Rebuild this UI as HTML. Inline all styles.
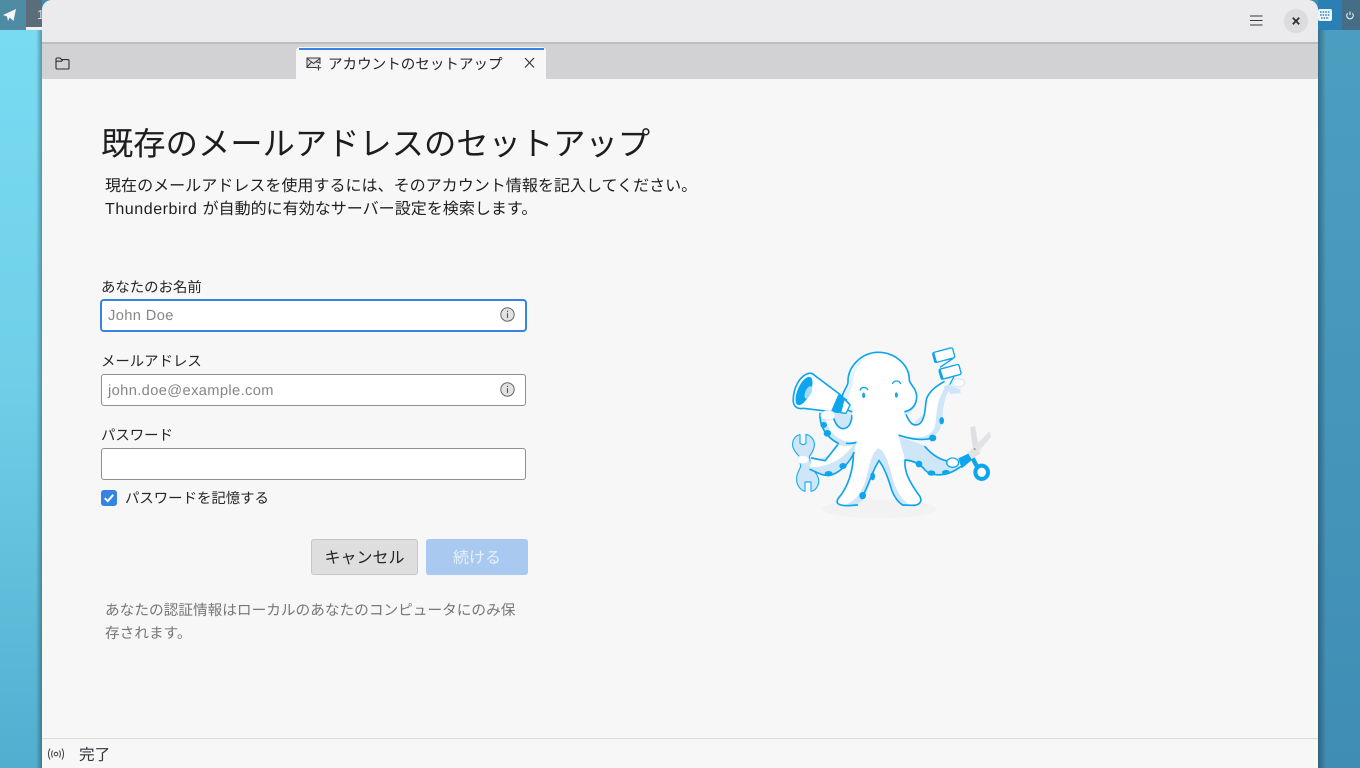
<!DOCTYPE html>
<html lang="ja">
<head>
<meta charset="utf-8">
<style>
html,body{margin:0;padding:0;width:1360px;height:768px;overflow:hidden;background:#3f8db5;}
body{position:relative;font-family:"Liberation Sans","Noto Sans CJK JP",sans-serif;color:#1f1f22;text-rendering:geometricPrecision;}
.a{position:absolute;white-space:nowrap;}
.input{position:absolute;left:101px;width:423px;height:30px;background:#fff;border:1px solid #8f8f93;border-radius:3px;}
.ph{position:absolute;left:108px;color:#85858a;font-size:14.67px;line-height:20px;white-space:nowrap;letter-spacing:.38px;}
.lbl{position:absolute;left:101px;font-size:14.4px;line-height:20px;white-space:nowrap;color:#26262a;}
</style>
</head>
<body>
<div class="a" style="left:0;top:0;width:42px;height:768px;background:linear-gradient(180deg,#7adcf3 0,#6fcfe8 50%,#52aecf 100%);"></div>
<div class="a" style="left:1318px;top:0;width:42px;height:768px;background:linear-gradient(180deg,#4d9fc0 0,#3f8db5 100%);"></div>
<div class="a" style="left:36px;top:0;width:6px;height:768px;background:linear-gradient(90deg,rgba(0,0,0,0),rgba(0,0,0,.3));"></div>
<div class="a" style="left:1318px;top:0;width:8px;height:768px;background:linear-gradient(90deg,rgba(0,0,0,.3),rgba(0,0,0,0));"></div>
<div class="a" style="left:0;top:0;width:26px;height:30px;background:#4f8ba3;"></div>
<div class="a" style="left:26px;top:0;width:16px;height:30px;background:#5b6c7b;"></div>
<div class="a" style="left:26px;top:27px;width:16px;height:3px;background:#f2f2f2;"></div>
<div class="a" style="left:37px;top:6px;color:#d8dde2;font-size:13px;line-height:18px;">1</div>
<svg class="a" style="left:0;top:0" width="20" height="26" viewBox="0 0 20 26"><path d="M3 15 L16 9 L13.5 21 L9.7 17.5 L8 21 L7 16.5 Z" fill="#f4f6f7"/></svg>
<div class="a" style="left:1318px;top:0;width:24px;height:30px;background:#2a7fb5;"></div>
<div class="a" style="left:1342px;top:0;width:18px;height:30px;background:#456d85;"></div>
<svg class="a" style="left:1318px;top:8px" width="15" height="14" viewBox="0 0 15 14"><rect x="0" y="1" width="14" height="12" rx="2" fill="#eef4f8"/><path d="M2 4h10M2 7h10M3 10h8" stroke="#3a86b8" stroke-width="1.4" stroke-dasharray="1.6 1"/></svg>
<svg class="a" style="left:1345px;top:10px" width="10" height="10" viewBox="0 0 10 10"><path d="M2.6 3.2 A3.3 3.3 0 1 0 7.4 3.2 M5 1.5 V5" fill="none" stroke="#e8eef2" stroke-width="1.1"/></svg>

<div class="a" style="left:42px;top:0;width:1276px;height:768px;background:#f7f7f7;border-radius:10px 10px 0 0;overflow:hidden;">
  <div class="a" style="left:0;top:0;width:1276px;height:42px;background:#ebebed;"></div>
  <div class="a" style="left:0;top:42px;width:1276px;height:2px;background:#bdbdbf;"></div>
  <div class="a" style="left:0;top:44px;width:1276px;height:35px;background:#d2d2d4;"></div>
</div>
<svg class="a" style="left:55px;top:57px" width="15" height="13" viewBox="0 0 15 13"><path d="M1 2.2 Q1 1 2.2 1 H5.2 L6.6 2.6 H13 Q14 2.6 14 3.6 V11 Q14 12 13 12 H2 Q1 12 1 11 Z M1 4.2 H6.6 L7.6 3" fill="none" stroke="#2e2e32" stroke-width="1.1"/></svg>
<svg class="a" style="left:1250px;top:15px" width="13" height="11" viewBox="0 0 13 11"><path d="M0 1h12.5M0 5.5h12.5M0 10h12.5" stroke="#3a3a3e" stroke-width="1"/></svg>
<div class="a" style="left:1284px;top:9px;width:24px;height:24px;border-radius:50%;background:#dcdcde;"></div>
<svg class="a" style="left:1292px;top:17px" width="8" height="8" viewBox="0 0 8 8"><path d="M.8 .8L7.2 7.2M7.2 .8L.8 7.2" stroke="#2e2e32" stroke-width="1.8"/></svg>

<div class="a" style="left:296px;top:47px;width:250px;height:32px;background:#f7f7f7;border-radius:4px 4px 0 0;"></div>
<div class="a" style="left:299px;top:48px;width:245px;height:2px;background:#3584e4;"></div>
<svg class="a" style="left:306px;top:57px" width="16" height="14" viewBox="0 0 16 14"><rect x="1" y="1" width="13" height="10" fill="#e4e4e6"/><path d="M10 10.5 H1 V1 H14 V7 M1 1.5 L7.5 6.5 L14 1.5 M1 10 L5.5 5 M14 5.5 L10 5" fill="none" stroke="#3a3a3e" stroke-width="1"/><path d="M12.5 8 V13.5 M9.8 10.8 H15.2" stroke="#3a3a3e" stroke-width="1"/></svg>
<div class="a" style="left:328px;top:54px;font-size:14.55px;line-height:22px;color:#26262a;">アカウントのセットアップ</div>
<svg class="a" style="left:524px;top:58px" width="11" height="10" viewBox="0 0 11 10"><path d="M1 0L10 9.5M10 0L1 9.5" stroke="#3a3a3e" stroke-width="1.2"/></svg>

<div class="a" style="left:101px;top:121px;font-size:32.3px;line-height:46px;color:#1d1d20;">既存のメールアドレスのセットアップ</div>
<div class="a" style="left:105px;top:175px;font-size:16.05px;line-height:23px;color:#1f1f22;">現在のメールアドレスを使用するには、そのアカウント情報を記入してください。<br><span style="letter-spacing:.55px;">Thunderbird </span>が自動的に有効なサーバー設定を検索します。</div>

<div class="lbl" style="top:278px;">あなたのお名前</div>
<div class="input" style="top:299px;left:100px;border:2px solid #3584e4;border-radius:4px;width:423px;height:29px;"></div>
<div class="ph" style="top:306px;">John Doe</div>
<svg class="a" style="left:500px;top:307px" width="15" height="15" viewBox="0 0 15 15"><circle cx="7.5" cy="7.5" r="6.7" fill="#e2e2e3" stroke="#68686c" stroke-width="1"/><path d="M7.5 6.3V11M7.5 3.8V5.1" stroke="#55555a" stroke-width="1.1"/></svg>

<div class="lbl" style="top:352px;">メールアドレス</div>
<div class="input" style="top:374px;"></div>
<div class="ph" style="top:381px;">john.doe@example.com</div>
<svg class="a" style="left:500px;top:382px" width="15" height="15" viewBox="0 0 15 15"><circle cx="7.5" cy="7.5" r="6.7" fill="#e2e2e3" stroke="#68686c" stroke-width="1"/><path d="M7.5 6.3V11M7.5 3.8V5.1" stroke="#55555a" stroke-width="1.1"/></svg>

<div class="lbl" style="top:426px;">パスワード</div>
<div class="input" style="top:448px;"></div>

<div class="a" style="left:101px;top:490px;width:16px;height:16px;background:#3584e4;border-radius:3px;"></div>
<svg class="a" style="left:101px;top:490px" width="16" height="16" viewBox="0 0 16 16"><path d="M3.8 8.2L6.8 11.2L12.2 4.8" fill="none" stroke="#fff" stroke-width="2"/></svg>
<div class="lbl" style="left:125px;top:489px;">パスワードを記憶する</div>

<div class="a" style="left:311px;top:539px;width:105px;height:34px;background:#dedede;border:1px solid #c6c6c8;border-radius:3px;text-align:center;font-size:16px;line-height:38px;color:#26262a;">キャンセル</div>
<div class="a" style="left:426px;top:539px;width:102px;height:36px;background:#a9c9f0;border-radius:3px;text-align:center;font-size:16px;line-height:40px;color:#e8f0fa;">続ける</div>

<div class="a" style="left:105px;top:600px;font-size:14.67px;line-height:23px;color:#77777b;">あなたの認証情報はローカルのあなたのコンピュータにのみ保<br>存されます。</div>

<div class="a" style="left:42px;top:738px;width:1276px;height:1px;background:#dcdcde;"></div>
<svg class="a" style="left:47px;top:747px" width="18" height="14" viewBox="0 0 18 14" fill="none" stroke="#3e3e42" stroke-width="1"><circle cx="9" cy="7" r="1.8"/><path d="M5.6 3.5 Q3.6 7 5.6 10.5 M12.4 3.5 Q14.4 7 12.4 10.5 M3 1.5 Q-.2 7 3 12.5 M15 1.5 Q18.2 7 15 12.5"/></svg>
<div class="a" style="left:79px;top:745px;font-size:15.6px;line-height:22px;color:#33333a;">完了</div>

<svg class="a" style="left:770px;top:330px" width="240" height="200" viewBox="0 0 720 600">
  <ellipse cx="327" cy="537" rx="172" ry="28" fill="#f2f2f3"/>
  <!-- scissors -->
  <path d="M600 292 L615 288 L630 372 L612 382 Z" fill="#dfdfe3"/>
  <path d="M660 303 L662 322 L606 388 L590 372 Z" fill="#e3e3e6"/>
  <circle cx="614" cy="357" r="3" fill="#9a9a9e"/>
  <path d="M608 385 L620 408" stroke="#0ea5ef" stroke-width="13"/>
  <ellipse cx="635" cy="427" rx="19" ry="20" fill="#fff" stroke="#0ea5ef" stroke-width="12"/>
  <path d="M565 385 L595 371 L606 390 L575 415 Z" fill="#0ea5ef"/>
  <!-- wrench -->
  <path d="M90 314 C75 316 66 332 68 348 C70 362 82 372 88 380 L92 410 C85 425 78 435 80 452 C82 470 95 482 105 484 L105 456 H123 L123 484 C138 482 147 465 146 450 C145 432 128 422 124 410 L118 380 C125 370 135 355 133 340 C131 325 120 316 108 313 L108 340 Q100 348 90 340 Z" fill="#cfe6f8" stroke="#22aef0" stroke-width="3.5" stroke-linejoin="round"/>
  <!-- right lower arm -->
  <path d="M385 320 C430 335 455 342 468 350 C490 372 510 385 535 392 L570 410 C545 428 520 442 490 436 C465 425 445 400 405 390 Z" fill="#cfe6f8"/>
  <path d="M465 350 C485 372 505 388 532 393 M405 390 C430 392 450 400 465 420 C480 437 525 445 572 410" fill="none" stroke="#0ea5ef" stroke-width="5" stroke-linecap="round"/>
  <!-- left lower arm -->
  <path d="M205 340 C190 360 170 395 125 385 L120 418 C145 430 160 438 180 436 C205 430 235 405 252 368 L258 335 Z" fill="#cfe6f8"/>
  <path d="M205 340 C190 360 175 380 165 392 C150 390 135 388 122 384 L120 412 C170 412 215 392 250 345 Z" fill="#fff"/>
  <path d="M208 338 C190 360 180 375 165 392 L125 384 M120 418 C145 430 160 438 180 436 C205 430 235 405 252 368" fill="none" stroke="#0ea5ef" stroke-width="5" stroke-linecap="round"/>
  <!-- left upper arm -->
  <path d="M150 250 C145 290 175 335 215 348 C245 352 275 340 295 320 L250 250 Z" fill="#cfe6f8"/>
  <path d="M168 265 C172 298 195 328 235 335 C255 338 275 332 292 320 L255 245 L245 245 C248 265 240 290 215 298 C200 295 195 280 190 262 Z" fill="#fff"/>
  <path d="M150 250 C148 285 165 320 205 340 M190 262 C197 285 210 300 225 295 C242 290 248 265 245 245 M230 340 C250 342 275 335 292 322" fill="none" stroke="#0ea5ef" stroke-width="5" stroke-linecap="round"/>
  <!-- right upper arm -->
  <path d="M385 316 C430 335 480 335 505 305 C525 280 510 230 535 185 L575 190 L530 165 C490 190 475 230 465 250 Z" fill="#cfe6f8"/>
  <path d="M385 313 C425 325 470 330 490 300 C505 275 490 230 522 178 L522 155 C490 170 465 190 465 245 C460 270 440 290 425 280 C415 270 410 258 405 245 Z" fill="#fff"/>
  <path d="M405 245 C415 275 430 295 450 280 C468 265 465 220 470 205 C480 180 505 165 522 155 M382 314 C420 328 470 335 492 320" fill="none" stroke="#0ea5ef" stroke-width="5" stroke-linecap="round"/>
  <!-- head shade -->
  <path d="M440 200 C445 225 430 245 405 255 L395 240 Z" fill="#cfe6f8"/>
  <path d="M218 195 C212 225 225 245 245 255 L255 240 Z" fill="#dcecf9"/>
  <!-- body white -->
  <path d="M245 245 C225 240 212 215 218 195 C222 180 232 170 234 158 C232 110 275 67 325 67 C375 67 418 105 418 150 C420 165 440 175 440 200 C440 225 425 240 405 245 L385 315 L405 390 C405 410 408 425 412 445 C425 470 445 490 452 512 C450 527 430 527 400 526 C385 520 375 505 365 480 C355 445 340 410 327 392 C312 415 300 450 290 482 C280 510 262 525 235 527 C215 528 198 525 200 510 C215 490 240 460 250 415 C255 390 255 360 260 335 Z" fill="#fff"/>
  <!-- head inner shade -->
  <path d="M238 158 C238 125 258 92 298 76 C262 100 250 130 250 158 C248 175 234 190 236 208 C238 222 246 235 258 243 L246 243 C230 236 220 212 223 195 C226 180 236 172 238 158 Z" fill="#e6f2fb"/>
  <!-- middle leg shade -->
  <path d="M325 355 C305 365 298 410 288 445 C278 485 260 510 225 525 L262 525 C280 510 290 495 295 475 C305 445 315 415 327 392 C340 412 352 445 362 478 C372 505 385 520 400 526 L420 526 C395 510 378 480 368 445 C358 405 345 360 325 355 Z" fill="#cfe6f8"/>
  <!-- outlines -->
  <path d="M245 245 C225 240 212 215 218 195 C222 180 232 170 234 158 C232 110 275 67 325 67 C375 67 418 105 418 150 C420 165 440 175 440 200 C440 225 425 240 405 245" fill="none" stroke="#0ea5ef" stroke-width="5" stroke-linecap="round"/>
  <path d="M250 370 C250 420 235 470 205 505 C195 520 205 527 235 527 L262 525 M405 390 C403 420 410 445 450 500 C458 518 445 527 425 526 L398 525" fill="none" stroke="#0ea5ef" stroke-width="5" stroke-linecap="round"/>
  <path d="M278 497 C295 470 305 425 327 392 C342 412 355 445 365 480 C372 500 385 517 398 525" fill="none" stroke="#0ea5ef" stroke-width="5" stroke-linecap="round"/>
  <!-- face -->
  <path d="M270 182 C272 170 288 170 294 180 M367 162 C372 150 388 150 392 162" fill="none" stroke="#0ea5ef" stroke-width="4"/>
  <ellipse cx="281" cy="196" rx="4.5" ry="8" fill="#0ea5ef"/>
  <ellipse cx="379" cy="195" rx="4.5" ry="8" fill="#0ea5ef"/>
  <!-- suckers -->
  <g fill="#0ea5ef">
    <ellipse cx="161" cy="285" rx="10" ry="9"/><ellipse cx="172" cy="310" rx="11" ry="10"/>
    <ellipse cx="176" cy="431" rx="12" ry="8"/><ellipse cx="219" cy="408" rx="11" ry="9"/>
    <ellipse cx="278" cy="497" rx="10" ry="11"/><ellipse cx="308" cy="439" rx="7" ry="12"/>
    <ellipse cx="447" cy="402" rx="10" ry="10"/><ellipse cx="484" cy="429" rx="12" ry="8"/><ellipse cx="528" cy="427" rx="12" ry="7"/>
    <ellipse cx="488" cy="324" rx="11" ry="10"/><ellipse cx="515" cy="272" rx="7" ry="11"/>
  </g>
  <!-- megaphone -->
  <path d="M118 130 C90 135 68 175 70 215 C72 232 85 238 100 235 L185 245 L240 225 L212 195 L135 137 C130 132 124 129 118 130 Z" fill="#fff" stroke="#0ea5ef" stroke-width="5" stroke-linejoin="round"/>
  <ellipse cx="102" cy="183" rx="19" ry="46" transform="rotate(24 102 183)" fill="#0ea5ef"/>
  <ellipse cx="115" cy="187" rx="9" ry="20" transform="rotate(24 115 187)" fill="#9fdcf8"/>
  <path d="M205 193 L182 246 L208 250 L232 208 Z" fill="#0ea5ef"/>
  <path d="M222 207 L240 225 L228 250 L212 248 Z" fill="#fff" stroke="#0ea5ef" stroke-width="4" stroke-linejoin="round"/>
  <!-- hand blobs -->
  <ellipse cx="174" cy="256" rx="21" ry="14" fill="#fff" stroke="#d5e9f8" stroke-width="3"/>
  <ellipse cx="99" cy="389" rx="18" ry="12" fill="#fff" stroke="#d5e9f8" stroke-width="2"/>
  <ellipse cx="548" cy="398" rx="18" ry="14" fill="#fff" stroke="#0ea5ef" stroke-width="4"/>
  <!-- stamps -->
  <path d="M515 92 L548 86 L510 112 M535 145 L558 128 L535 172" fill="#fff" stroke="#0ea5ef" stroke-width="4" stroke-linejoin="round"/>
  <path d="M532 160 L572 180 L570 190 L540 192 Z" fill="#cfe6f8"/>
  <ellipse cx="566" cy="158" rx="18" ry="12" fill="#fff" stroke="#d5e9f8" stroke-width="4"/>
  <rect x="490" y="60" width="62" height="31" rx="5" transform="rotate(-15 521 75)" fill="#fff" stroke="#0ea5ef" stroke-width="4"/>
  <rect x="509" y="110" width="62" height="31" rx="5" transform="rotate(-15 540 125)" fill="#fff" stroke="#0ea5ef" stroke-width="4"/>
  <path d="M486 71 L494 99 L501 96 L493 68 Z M505 121 L513 149 L521 146 L512 118 Z" fill="#0ea5ef"/>
</svg>
</body>
</html>
